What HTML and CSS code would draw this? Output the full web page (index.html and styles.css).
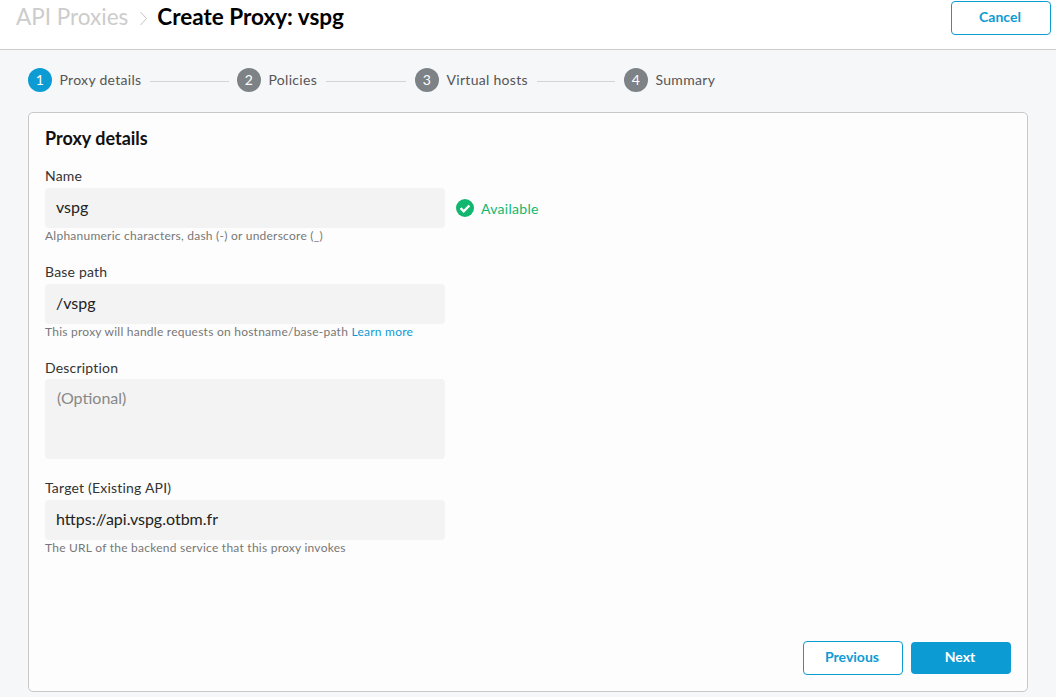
FILE: index.html
```html
<!DOCTYPE html>
<html lang="en">
<head>
    <meta charset="UTF-8">
    <title>Create Proxy: vspg</title>
    <link rel="stylesheet" href="styles.css">
</head>
<body>

    <!-- Header -->
    <header class="top-bar">
        <div class="crumbs">
            <span class="crumb-parent">API Proxies</span>
            <svg class="crumb-arrow" width="9" height="15" viewBox="0 0 9 15"><path d="M1.500 1 7.500 7.500 1.500 14" fill="none" stroke="#c4c4c4" stroke-width="1"/></svg>
            <h1>Create Proxy: vspg</h1>
        </div>
        <button class="btn btn-outline cancel-btn">Cancel</button>
    </header>

    <!-- Steps -->
    <ol class="steps">
        <li class="step active"><span class="step-num">1</span><span>Proxy details</span><span class="step-line"></span></li>
        <li class="step step-2"><span class="step-num">2</span><span>Policies</span><span class="step-line"></span></li>
        <li class="step step-3"><span class="step-num">3</span><span>Virtual hosts</span><span class="step-line"></span></li>
        <li class="step"><span class="step-num">4</span><span>Summary</span></li>
    </ol>

    <main class="card">
        <h2>Proxy details</h2>

        <div class="field">
            <label>Name</label>
            <div class="input-row">
                <div class="input">vspg</div>
                <span class="available">
                    <svg width="18" height="18" viewBox="0 0 18 18"><circle cx="9" cy="9" r="9" fill="#12b76f"/><path d="M4.600 9.200 7.700 12.300 13.400 6.500" fill="none" stroke="#fff" stroke-width="2.400"/></svg>
                    Available
                </span>
            </div>
            <p class="hint">Alphanumeric characters, dash (-) or underscore (_)</p>
        </div>

        <div class="field">
            <label>Base path</label>
            <div class="input">/vspg</div>
            <p class="hint">This proxy will handle requests on hostname/base-path <a href="#">Learn more</a></p>
        </div>

        <div class="field field-desc">
            <label>Description</label>
            <div class="input textarea">(Optional)</div>
        </div>

        <div class="field">
            <label>Target (Existing API)</label>
            <div class="input">https://api.vspg.otbm.fr</div>
            <p class="hint">The URL of the backend service that this proxy invokes</p>
        </div>

        <div class="actions">
            <button class="btn btn-outline">Previous</button>
            <button class="btn btn-primary">Next</button>
        </div>
    </main>

</body>
</html>
```

FILE: styles.css
```css
body {
    font-family: Lato, sans-serif;
    background-color: #f6f7f9;
    margin: 0;
    padding: 0;
    height: 697px;
    overflow: hidden;
    color: #333;
}

/* Header */
.top-bar {
    height: 49px;
    box-sizing: content-box;
    background-color: #fff;
    border-bottom: 1px solid #ccc;
    display: flex;
    justify-content: space-between;
    align-items: flex-start;
    padding: 0 5px 0 16px;
}
.crumbs {
    display: flex;
    align-items: center;
    height: 33px;
}
.crumb-parent {
    font-size: 22.500px;
    color: #ccc;
}
.crumb-arrow {
    margin: 3px 9px 0 11px;
}
h1 {
    font-size: 22.500px;
    font-weight: 700;
    color: #000;
    margin: 0;
}
.cancel-btn {
    margin-top: 1px;
    width: 100px;
    height: 34px;
}

/* Steps */
.steps {
    list-style: none;
    display: flex;
    margin: 0;
    padding: 18px 0 0 28px;
    height: 44px;
    font-size: 14px;
    letter-spacing: 0.3px;
    color: #555;
}
.step {
    display: flex;
    align-items: flex-start;
    line-height: 24px;
    width: 209px;
}
.step-2 {
    width: 178px;
}
.step-3 {
    width: 209px;
}
.step-num {
    width: 24px;
    height: 24px;
    border-radius: 50%;
    background-color: #7d8287;
    color: #fff;
    text-align: center;
    margin-right: 7.500px;
    flex: none;
}
.step.active .step-num {
    background-color: #0d9bd4;
}
.step-line {
    flex: 1;
    height: 1px;
    background-color: #d2d4d6;
    margin: 13px 0 0 9px;
}
.step:first-child .step-line { margin-right: 8px; }
.step-2 .step-line, .step-3 .step-line { margin-right: 9px; }

/* Card */
.card {
    position: relative;
    background-color: #fdfdfd;
    border: 1px solid #c8c8c8;
    border-radius: 5px;
    margin: 0 28px;
    height: 578px;
    padding: 0 16px;
}
h2 {
    font-size: 18px;
    font-weight: 700;
    color: #111;
    margin: 13px 0 0 0;
    line-height: 24px;
}
.field {
    margin-top: 17px;
    height: 79px;
}
.field + .field {
    margin-top: 17px;
}
.field-desc {
    height: 103px;
}
label {
    display: block;
    font-size: 14px;
    line-height: 18px;
    letter-spacing: 0.2px;
    margin-bottom: 3px;
}
.field-desc label {
    margin-bottom: 2px;
}
.input-row {
    display: flex;
    align-items: center;
}
.input {
    width: 400px;
    height: 40px;
    flex: none;
    box-sizing: border-box;
    padding: 0 11px;
    background-color: #f3f3f3;
    border-radius: 4px;
    font-size: 16px;
    line-height: 38px;
    color: #222;
}
.input-row .input {
    line-height: 37px;
}
.textarea {
    height: 80px;
    padding-left: 12px;
    color: #888;
}
.available {
    display: flex;
    align-items: center;
    gap: 7px;
    margin: 0 0 0 11px;
    font-size: 14px;
    letter-spacing: 0.3px;
    color: #12b76f;
}
.hint {
    font-size: 12px;
    line-height: 16px;
    letter-spacing: 0.24px;
    color: #777;
    margin: 0;
}
.hint a {
    color: #0d9bd4;
    text-decoration: none;
}

/* Buttons */
.btn {
    font-family: Lato, sans-serif;
    font-size: 14px;
    font-weight: 700;
    border-radius: 4px;
    cursor: pointer;
    padding: 0 2px 3px 0;
}
.btn-outline {
    background-color: #fff;
    border: 1px solid #0d9bd4;
    color: #0d9bd4;
}
.btn-primary {
    background-color: #0d9bd4;
    border: none;
    color: #fff;
}
.actions {
    position: absolute;
    right: 16px;
    bottom: 16px;
    display: flex;
    gap: 8px;
    align-items: center;
}
.actions .btn-outline {
    width: 100px;
    height: 34px;
}
.actions .btn-primary {
    width: 100px;
    height: 32px;
}
```
